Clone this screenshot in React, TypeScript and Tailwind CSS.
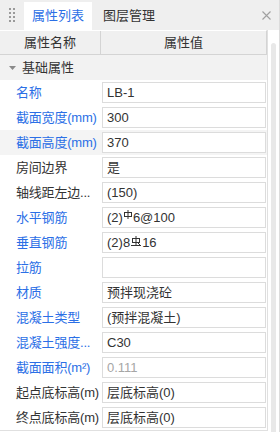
import React from "react";

type Row = {
  label: string;
  value: React.ReactNode;
  blue?: boolean;
  active?: boolean;
  disabled?: boolean;
};

// HPB300 rebar glyph
const Hpb = () => (
  <svg width="8" height="9" viewBox="0 0 8 9" className="mx-[1px] -translate-y-[3px]">
    <rect x="0.5" y="2.5" width="7" height="4" fill="none" stroke="#333" strokeWidth="1" />
    <line x1="4" y1="0" x2="4" y2="9" stroke="#333" strokeWidth="1" />
  </svg>
);

// HRB400 rebar glyph
const Hrb = () => (
  <svg width="10" height="11" viewBox="0 0 10 11" className="mx-[1px] -translate-y-[1px]">
    <rect x="1.5" y="2.5" width="7" height="4" fill="none" stroke="#333" strokeWidth="1" />
    <line x1="5" y1="0" x2="5" y2="10" stroke="#333" strokeWidth="1" />
    <line x1="0" y1="9.5" x2="10" y2="9.5" stroke="#333" strokeWidth="1" />
    <line x1="7" y1="7" x2="9" y2="9" stroke="#333" strokeWidth="1" />
  </svg>
);

const ROWS: Row[] = [
  { label: "名称", value: "LB-1", blue: true },
  { label: "截面宽度(mm)", value: "300", blue: true },
  { label: "截面高度(mm)", value: "370", blue: true, active: true },
  { label: "房间边界", value: "是" },
  { label: "轴线距左边...", value: "(150)" },
  {
    label: "水平钢筋",
    value: (
      <span className="flex items-center">
        (2)
        <Hpb />
        6@100
      </span>
    ),
    blue: true,
  },
  {
    label: "垂直钢筋",
    value: (
      <span className="flex items-center">
        (2)8
        <Hrb />
        16
      </span>
    ),
    blue: true,
  },
  { label: "拉筋", value: "", blue: true },
  { label: "材质", value: "预拌现浇砼", blue: true },
  { label: "混凝土类型", value: "(预拌混凝土)", blue: true },
  { label: "混凝土强度...", value: "C30", blue: true },
  { label: "截面面积(m²)", value: "0.111", blue: true, disabled: true },
  { label: "起点底标高(m)", value: "层底标高(0)" },
  { label: "终点底标高(m)", value: "层底标高(0)" },
];

export default function App() {
  return (
    <div
      className="w-[280px] h-[432px] bg-white border-r border-[#dcdcdc] overflow-hidden text-[13px] text-[#333]"
      style={{ fontFamily: '"Liberation Sans", "Noto Sans CJK SC", sans-serif' }}
    >
      {/* tab bar */}
      <div className="h-[30px] bg-[#efefef] flex items-end">
        <div className="w-[24px] h-full flex items-center justify-center">
          <div className="grid grid-cols-2 gap-x-[2px] gap-y-[2px]">
            {Array.from({ length: 8 }).map((_, i) => (
              <span key={i} className="w-[2px] h-[2px] bg-[#9a9a9a]" />
            ))}
          </div>
        </div>
        <div className="h-[28px] w-[68px] bg-white flex items-center justify-center text-[#2b6fe6]">
          属性列表
        </div>
        <div className="h-[28px] px-[11px] flex items-center">图层管理</div>
        <div className="flex-1" />
        <div className="h-full w-[26px] flex items-center justify-center text-[#9a9a9a]">
          <svg width="9" height="9" viewBox="0 0 9 9">
            <path d="M0.5 0.5 L8.5 8.5 M8.5 0.5 L0.5 8.5" stroke="#a0a0a0" strokeWidth="1.1" />
          </svg>
        </div>
      </div>

      <div className="flex">
        {/* grid */}
        <div className="w-[268px] border-r border-b border-[#e0e0e0]">
          <div className="h-[25px] flex bg-[#f0f0f0] border-t border-white border-b border-b-[#d4d4d4] border-r border-r-[#d4d4d4]">
            <div className="w-[101px] border-r border-[#d4d4d4] flex items-center justify-center">属性名称</div>
            <div className="flex-1 flex items-center justify-center">属性值</div>
          </div>
          <div className="h-[25px] flex items-center bg-[#f2f2f2]">
            <svg width="7" height="4" viewBox="0 0 7 4" className="ml-[9px] mr-[6px]">
              <path d="M0 0 L7 0 L3.5 4 Z" fill="#8a8a8a" />
            </svg>
            <span>基础属性</span>
          </div>
          {ROWS.map((r) => (
            <div key={r.label} className={`h-[25px] flex items-center ${r.active ? "bg-[#f4f4f4]" : ""}`}>
              <div
                className={`w-[102px] shrink-0 pl-[16px] whitespace-nowrap tracking-[-0.2px] ${r.blue ? "text-[#2b6fe6]" : "text-[#333]"}`}
              >
                {r.label}
              </div>
              <div
                className={`w-[164px] h-[21px] border border-[#dcdcdc] bg-white pl-[4px] flex items-center ${
                  r.disabled ? "text-[#a6a6a6]" : "text-[#333]"
                }`}
              >
                {r.value}
              </div>
            </div>
          ))}
        </div>
        {/* scrollbar */}
        <div className="flex-1 relative">
          <div className="absolute left-[3px] top-[13px] w-[5px] h-[400px] rounded-t-full bg-[#e8e8e8]" />
        </div>
      </div>
    </div>
  );
}
